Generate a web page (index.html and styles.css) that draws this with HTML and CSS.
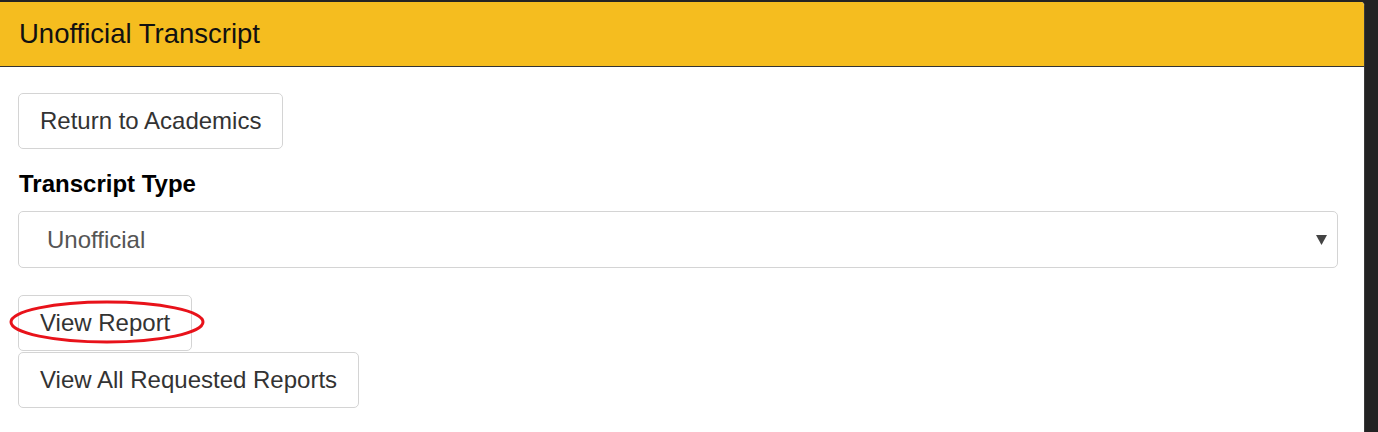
FILE: index.html
```html
<!DOCTYPE html>
<html lang="en">
<head>
    <meta charset="UTF-8">
    <meta name="viewport" content="width=device-width, initial-scale=1.0">
    <title>Unofficial Transcript</title>
    <link rel="stylesheet" href="styles.css">
</head>
<body>
    <div class="panel">
        <div class="panel-heading">
            <h1>Unofficial Transcript</h1>
        </div>

        <div class="panel-body">
            <div>
                <a href="#" class="btn">Return to Academics</a>
            </div>

            <label class="field-label" for="transcript-type">Transcript Type</label>
            <div class="select-wrap">
                <select id="transcript-type" class="select">
                    <option>Unofficial</option>
                </select>
                <svg class="select-arrow" width="11" height="10" viewBox="0 0 11 10">
                    <path d="M0 0 H11 L5.5 10 Z" fill="#444"/>
                </svg>
            </div>

            <div class="actions">
                <div class="mark-wrap">
                    <a href="#" class="btn">View Report</a>
                    <!-- red highlight drawn over the button -->
                    <svg class="mark" width="198" height="44" viewBox="0 0 198 44">
                        <ellipse cx="99" cy="22" rx="96" ry="20" fill="none" stroke="#e8121a" stroke-width="3"/>
                    </svg>
                </div>
                <div>
                    <a href="#" class="btn">View All Requested Reports</a>
                </div>
            </div>
        </div>
    </div>
</body>
</html>
```

FILE: styles.css
```css
body {
    font-family: 'Liberation Sans', Arial, sans-serif;
    background-color: #232323;
    margin: 0;
    padding: 0;
    height: 432px;
    overflow: hidden;
}
.panel {
    margin-top: 2px;
    width: 1364px;
    height: 430px;
    background-color: white;
    border-right: 1px solid #3a3a3a;
    border-top-right-radius: 4px;
    overflow: hidden;
}
.panel-heading {
    background-color: #f5bd1f;
    border-bottom: 1px solid #333;
    padding: 17px 19px 17px;
}
.panel-heading h1 {
    margin: 0;
    font-size: 27.5px;
    font-weight: normal;
    line-height: 30px;
    color: #111;
}
.panel-body {
    padding: 26px 18px 0;
}
.btn {
    display: inline-block;
    padding: 10px 21px 11px;
    font-size: 24px;
    line-height: 33px;
    color: #333;
    background-color: white;
    border: 1px solid #d4d4d4;
    border-radius: 5px;
    text-decoration: none;
}
.field-label {
    display: block;
    margin: 18px 0 11px 1px;
    font-size: 24px;
    font-weight: bold;
    line-height: 33px;
    color: #000;
}
.select-wrap {
    position: relative;
    width: 1320px;
}
.select {
    display: block;
    width: 100%;
    height: 57px;
    padding: 0 28px;
    font-family: inherit;
    font-size: 24px;
    color: #555;
    background-color: white;
    border: 1px solid #d4d4d4;
    border-radius: 5px;
    appearance: none;
    -webkit-appearance: none;
}
.select-arrow {
    position: absolute;
    right: 11px;
    top: 24px;
}
.actions {
    margin-top: 27px;
    display: flex;
    flex-direction: column;
    gap: 1px;
    align-items: flex-start;
}
.mark-wrap {
    position: relative;
}
.mark {
    position: absolute;
    left: -10px;
    top: 5px;
}
```
